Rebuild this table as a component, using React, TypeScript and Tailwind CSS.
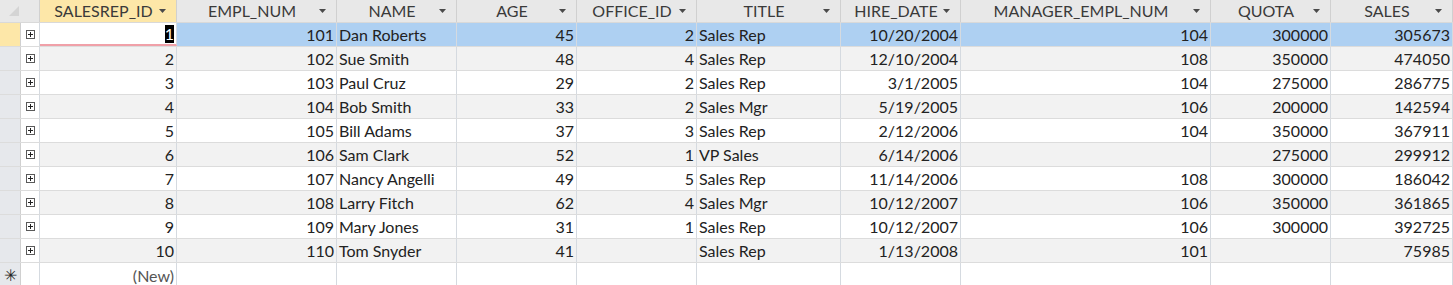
const cols = [
  { name: "SALESREP_ID", w: "w-[137px]", sel: true },
  { name: "EMPL_NUM", w: "w-[160px]" },
  { name: "NAME", w: "w-[120px]" },
  { name: "AGE", w: "w-[120px]" },
  { name: "OFFICE_ID", w: "w-[120px]" },
  { name: "TITLE", w: "w-[144px]" },
  { name: "HIRE_DATE", w: "w-[120px]" },
  { name: "MANAGER_EMPL_NUM", w: "w-[250px]" },
  { name: "QUOTA", w: "w-[120px]" },
  { name: "SALES", w: "w-[122px]" },
]

// right aligned = number/date, left = text
const align = ["r", "r", "l", "r", "r", "l", "r", "r", "r", "r"]

const rows = [
  ["1", "101", "Dan Roberts", "45", "2", "Sales Rep", "10/20/2004", "104", "300000", "305673"],
  ["2", "102", "Sue Smith", "48", "4", "Sales Rep", "12/10/2004", "108", "350000", "474050"],
  ["3", "103", "Paul Cruz", "29", "2", "Sales Rep", "3/1/2005", "104", "275000", "286775"],
  ["4", "104", "Bob Smith", "33", "2", "Sales Mgr", "5/19/2005", "106", "200000", "142594"],
  ["5", "105", "Bill Adams", "37", "3", "Sales Rep", "2/12/2006", "104", "350000", "367911"],
  ["6", "106", "Sam Clark", "52", "1", "VP Sales", "6/14/2006", "", "275000", "299912"],
  ["7", "107", "Nancy Angelli", "49", "5", "Sales Rep", "11/14/2006", "108", "300000", "186042"],
  ["8", "108", "Larry Fitch", "62", "4", "Sales Mgr", "10/12/2007", "106", "350000", "361865"],
  ["9", "109", "Mary Jones", "31", "1", "Sales Rep", "10/12/2007", "106", "300000", "392725"],
  ["10", "110", "Tom Snyder", "41", "", "Sales Rep", "1/13/2008", "101", "", "75985"],
]

function Arrow() {
  return (
    <svg width="7" height="4" viewBox="0 0 7 4" className="shrink-0">
      <path d="M0 0h7L3.5 4z" fill="#4a4a4a" />
    </svg>
  )
}

function PlusBox() {
  return (
    <div className="w-[9px] h-[9px] border border-[#5a5a5a] bg-white flex items-center justify-center relative">
      <div className="absolute w-[5px] h-px bg-[#222]" />
      <div className="absolute w-px h-[5px] bg-[#222]" />
    </div>
  )
}

export default function App() {
  return (
    <div
      className="w-[1453px] h-[285px] overflow-hidden bg-white text-[#222] text-[16px]"
      style={{ fontFamily: "Lato, 'Open Sans', sans-serif" }}
    >
      {/* header */}
      <div className="flex h-[23px] border-b border-[#d9d9d9]">
        <div className="w-[40px] shrink-0 bg-[#e8e8e8] border-r border-[#d0d0d0] relative">
          <svg width="10" height="10" viewBox="0 0 10 10" className="absolute left-[9px] top-[6px]">
            <path d="M10 0V10H0z" fill="#d4d4d4" />
          </svg>
        </div>
        {cols.map((c) => (
          <div
            key={c.name}
            className={`${c.w} shrink-0 flex items-center pl-2 pr-[10px] border-r border-[#d0d0d0] ${
              c.sel ? "bg-[#fde7a8]" : "bg-[#e8e8e8]"
            }`}
          >
            <span className="flex-1 text-center text-[#3a3a3a] leading-none">{c.name}</span>
            <Arrow />
          </div>
        ))}
      </div>

      {rows.map((r, i) => {
        const cur = i === 0
        const bg = cur ? "bg-[#aed0f2]" : i % 2 === 1 ? "bg-[#f2f2f2]" : "bg-white"
        return (
          <div key={i} className="flex h-[24px] border-b border-[#dcdcdc]">
            <div className={`w-[21px] shrink-0 border-r border-[#d0d0d0] ${cur ? "bg-[#fde7a8]" : "bg-[#e6e8ec]"}`} />
            <div className="w-[19px] shrink-0 bg-white border-r border-[#d5dae0] flex items-center justify-center">
              <PlusBox />
            </div>
            {r.map((v, j) => {
              const first = cur && j === 0
              return (
                <div
                  key={j}
                  className={`${cols[j].w} shrink-0 flex items-center px-[2px] pt-px border-r border-[#d5dae0] ${
                    align[j] === "r" ? "justify-end" : "justify-start"
                  } ${first ? "bg-white border-b-2 border-b-[#f0a0a8]" : bg}`}
                >
                  {first ? <span className="bg-black text-white leading-[18px]">{v}</span> : v}
                </div>
              )
            })}
          </div>
        )
      })}

      {/* new record row */}
      <div className="flex h-[24px]">
        <div className="w-[21px] shrink-0 bg-[#e6e8ec] border-r border-[#d0d0d0] flex items-center justify-center text-[16px] leading-none text-[#222]">
          ✳
        </div>
        <div className="w-[19px] shrink-0 border-r border-[#d5dae0]" />
        {cols.map((c, j) => (
          <div
            key={c.name}
            className={`${c.w} shrink-0 flex items-center justify-end px-[2px] pt-px border-r border-[#d5dae0] text-[#555]`}
          >
            {j === 0 ? "(New)" : ""}
          </div>
        ))}
      </div>
    </div>
  )
}
